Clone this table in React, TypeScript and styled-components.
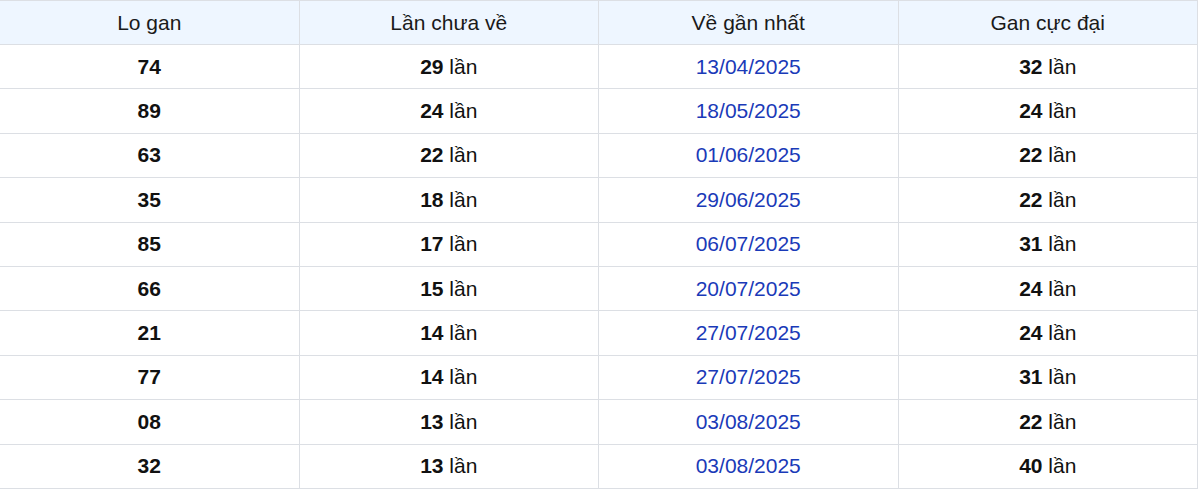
import * as React from 'react'
import styled, { createGlobalStyle } from 'styled-components'

const GlobalStyle = createGlobalStyle`
  html, body {
    margin: 0;
    padding: 0;
    background: #fff;
  }
  body {
    font-family: "Liberation Sans", Arial, sans-serif;
  }
`

type Row = {
  lo: string;
  chua: number;
  date: string;
  max: number;
}

const rows: Row[] = [
  { lo: '74', chua: 29, date: '13/04/2025', max: 32 },
  { lo: '89', chua: 24, date: '18/05/2025', max: 24 },
  { lo: '63', chua: 22, date: '01/06/2025', max: 22 },
  { lo: '35', chua: 18, date: '29/06/2025', max: 22 },
  { lo: '85', chua: 17, date: '06/07/2025', max: 31 },
  { lo: '66', chua: 15, date: '20/07/2025', max: 24 },
  { lo: '21', chua: 14, date: '27/07/2025', max: 24 },
  { lo: '77', chua: 14, date: '27/07/2025', max: 31 },
  { lo: '08', chua: 13, date: '03/08/2025', max: 22 },
  { lo: '32', chua: 13, date: '03/08/2025', max: 40 },
]

const Table = styled.table`
  width: 1199px;
  margin-left: -1px;
  border-collapse: collapse;
  table-layout: fixed;
  font-size: 21px;
  color: #111;
`

const HeadCell = styled.th`
  height: 43px;
  padding: 0;
  background: #eef6ff;
  border: 1px solid #dcdfe4;
  font-weight: normal;
  color: #1a1a1a;
  text-align: center;
`

const Cell = styled.td<{ $blue?: boolean }>`
  height: 43.4px;
  padding: 0;
  border: 1px solid #dcdfe4;
  text-align: center;
  color: ${p => p.$blue ? '#1a3ab8' : '#111'};
  b {
    font-weight: bold;
  }
`

const Lan: React.FC<{ n: number }> = ({ n }) => <><b>{n}</b> lần</>

export default function App() {
  return <>
    <GlobalStyle />
    <Table>
      <thead>
        <tr>
          <HeadCell>Lo gan</HeadCell>
          <HeadCell>Lần chưa về</HeadCell>
          <HeadCell>Về gần nhất</HeadCell>
          <HeadCell>Gan cực đại</HeadCell>
        </tr>
      </thead>
      <tbody>
        {rows.map((r, i) => <tr key={i}>
          <Cell><b>{r.lo}</b></Cell>
          <Cell><Lan n={r.chua} /></Cell>
          <Cell $blue>{r.date}</Cell>
          <Cell><Lan n={r.max} /></Cell>
        </tr>)}
      </tbody>
    </Table>
  </>
}
